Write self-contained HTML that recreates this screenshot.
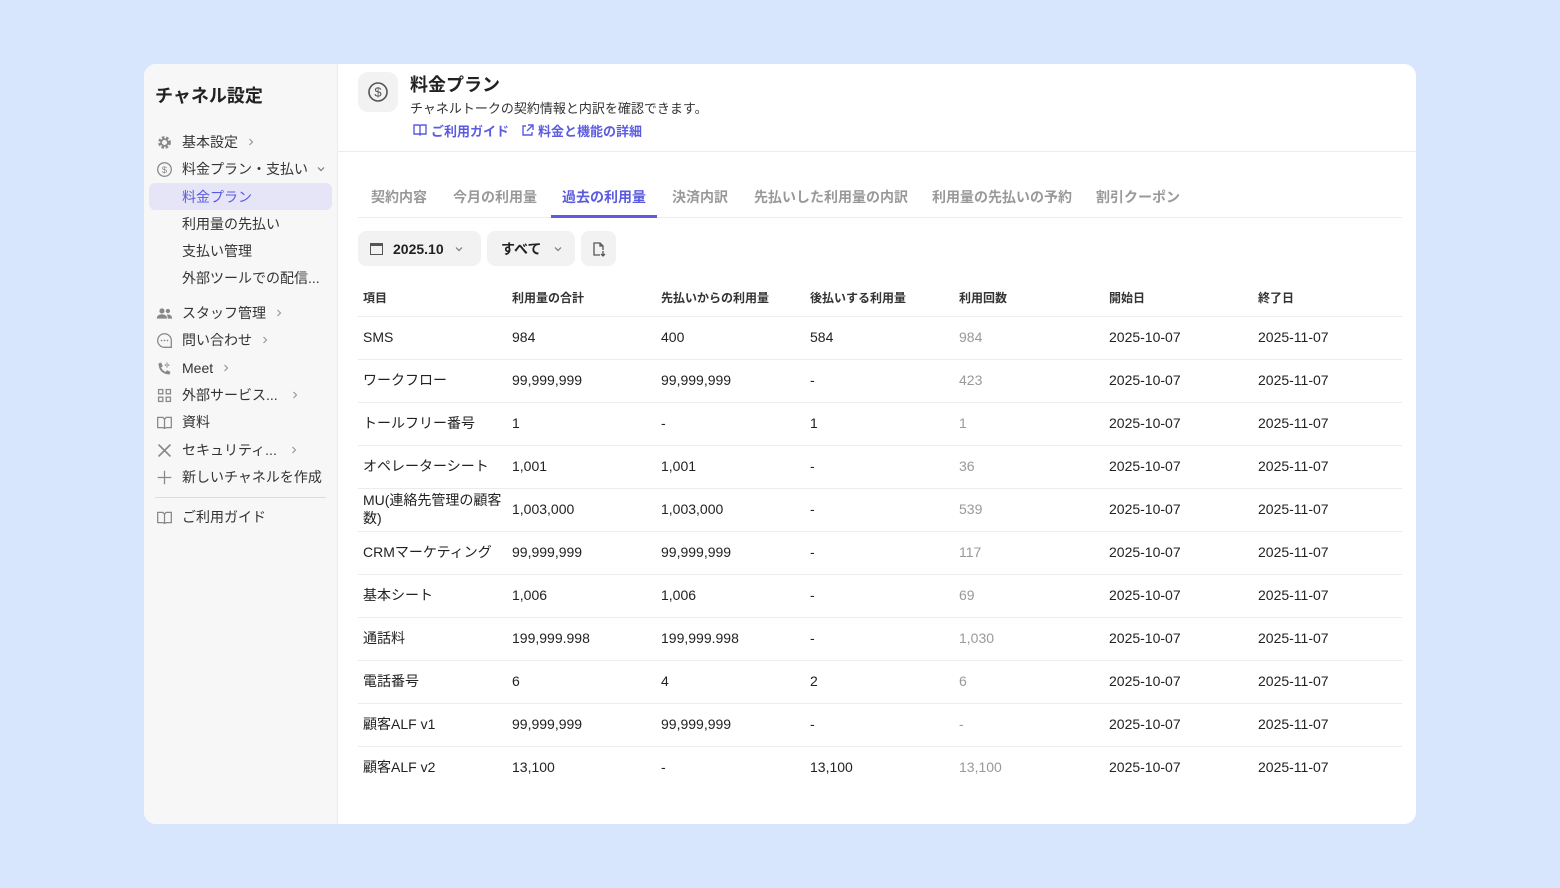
<!DOCTYPE html><html><head><meta charset="utf-8"><style>
*{box-sizing:border-box;margin:0;padding:0}
body{width:1560px;height:888px;background:#d7e5fd;font-family:"Liberation Sans","Noto Sans CJK JP",sans-serif;color:#222;position:relative;overflow:hidden}
.card{position:absolute;left:144px;top:64px;width:1272px;height:760px;background:#fff;border-radius:12px;overflow:hidden}
.side{position:absolute;left:0;top:0;width:194px;height:760px;background:#f7f7f7;border-right:1px solid #ececec}
.abs{position:absolute;white-space:nowrap}
.si{position:absolute;left:12px;font-size:14px;color:#333;display:flex;align-items:center;height:20px}
.si svg{width:17px;height:17px;margin-right:9px}
.sub{position:absolute;left:38px;font-size:14px;color:#333}
.si svg.cv{width:10px;height:10px;margin:0 0 0 8px}
.tab{position:absolute;top:187px;font-size:14px;color:#999;font-weight:bold}
.th{position:absolute;top:289px;font-size:12px;font-weight:bold;color:#333}
.row{position:absolute;left:358px;width:1044px;height:43px;border-top:1px solid #ececec;font-size:14px;color:#222}
.row span{position:absolute;top:12px;white-space:nowrap}
.g{color:#999}
.btn{position:absolute;top:231px;height:35px;background:#f2f2f2;border-radius:8px;font-size:14px;font-weight:bold;display:flex;align-items:center}
</style></head><body>
<svg width="0" height="0" style="position:absolute"><defs><symbol id="r" viewBox="0 0 10 10"><path d="M3.5 2l3 3-3 3" fill="none" stroke="#999" stroke-width="1.2"/></symbol><symbol id="d" viewBox="0 0 10 10"><path d="M2 3.5l3 3 3-3" fill="none" stroke="#777" stroke-width="1.2"/></symbol></defs></svg>
<div class="card">
<div class="side">
<div class="abs" style="left:11px;top:18px;font-size:18px;font-weight:bold;color:#222">チャネル設定</div>
<div class="si" style="top:68px"><svg viewBox="0 0 20 20"><circle cx="10" cy="10" r="6" fill="none" stroke="#888" stroke-width="3" stroke-dasharray="3 2"/><circle cx="10" cy="10" r="4" fill="none" stroke="#888" stroke-width="2"/></svg>基本設定<svg class="cv"><use href="#r"/></svg></div>
<div class="si" style="top:95px"><svg viewBox="0 0 20 20"><circle cx="10" cy="10" r="8" fill="none" stroke="#888" stroke-width="1.5"/><text x="10" y="14" font-size="11" text-anchor="middle" fill="#888">$</text></svg>料金プラン・支払い<svg class="cv"><use href="#d"/></svg></div>
<div class="abs" style="left:5px;top:119px;width:183px;height:27px;background:#e6e5f7;border-radius:6px"></div>
<div class="sub" style="top:123px;color:#5b5be0">料金プラン</div>
<div class="sub" style="top:150px">利用量の先払い</div>
<div class="sub" style="top:177px">支払い管理</div>
<div class="sub" style="top:204px">外部ツールでの配信...</div>
<div class="si" style="top:239px"><svg viewBox="0 0 20 20"><circle cx="7" cy="7" r="3" fill="#888"/><circle cx="14" cy="7" r="2.5" fill="#888"/><path d="M1 16c0-4 3-5 6-5s6 1 6 5zM13 11c3 0 6 1 6 5h-5" fill="#888"/></svg>スタッフ管理<svg class="cv"><use href="#r"/></svg></div>
<div class="si" style="top:266px"><svg viewBox="0 0 20 20"><path d="M10 2a8 8 0 1 0 0 16h8v-8a8 8 0 0 0-8-8z" fill="none" stroke="#888" stroke-width="1.5"/><circle cx="6.5" cy="10" r="1" fill="#888"/><circle cx="10" cy="10" r="1" fill="#888"/><circle cx="13.5" cy="10" r="1" fill="#888"/></svg>問い合わせ<svg class="cv"><use href="#r"/></svg></div>
<div class="si" style="top:294px"><svg viewBox="0 0 20 20"><path d="M3 4c0 8 5 13 13 13l1-3-4-2-2 2c-2-1-4-3-5-5l2-2-2-4z" fill="#888"/><path d="M13 3v6M11 5v2M15 5v2" stroke="#888" stroke-width="1.2"/></svg>Meet<svg class="cv"><use href="#r"/></svg></div>
<div class="si" style="top:321px"><svg viewBox="0 0 20 20" fill="none" stroke="#888" stroke-width="1.5"><rect x="3" y="3" width="5" height="5"/><rect x="12" y="3" width="5" height="5"/><rect x="3" y="12" width="5" height="5"/><rect x="12" y="12" width="5" height="5"/></svg>外部サービス...<svg class="cv" style="margin-left:12px"><use href="#r"/></svg></div>
<div class="si" style="top:348px"><svg viewBox="0 0 20 20" fill="none" stroke="#888" stroke-width="1.5"><path d="M2 4h6l2 2 2-2h6v12h-6l-2 1-2-1H2zM10 6v11"/></svg>資料</div>
<div class="si" style="top:376px"><svg viewBox="0 0 20 20" stroke="#888" stroke-width="2"><path d="M3 3l14 14M17 3L3 17"/></svg>セキュリティ...<svg class="cv" style="margin-left:12px"><use href="#r"/></svg></div>
<div class="si" style="top:403px"><svg viewBox="0 0 20 20" stroke="#888" stroke-width="1.5"><path d="M10 2v16M2 10h16"/></svg>新しいチャネルを作成</div>
<div class="abs" style="left:11px;top:433px;width:171px;height:1px;background:#ddd"></div>
<div class="si" style="top:443px"><svg viewBox="0 0 20 20" fill="none" stroke="#888" stroke-width="1.5"><path d="M2 4h6l2 2 2-2h6v12h-6l-2 1-2-1H2zM10 6v11"/></svg>ご利用ガイド</div>
</div>
</div>
<div class="abs" style="left:358px;top:72px;width:40px;height:40px;border-radius:10px;background:#f2f2f2"></div>
<svg class="abs" style="left:367px;top:81px" width="22" height="22" viewBox="0 0 22 22"><circle cx="11" cy="11" r="9" fill="none" stroke="#555" stroke-width="1.6"/><text x="11" y="15.5" font-size="13" text-anchor="middle" fill="#555" font-family="Liberation Sans">$</text></svg>
<div class="abs" style="left:410px;top:71px;font-size:18px;font-weight:bold">料金プラン</div>
<div class="abs" style="left:410px;top:98px;font-size:13px;color:#333">チャネルトークの契約情報と内訳を確認できます。</div>
<svg class="abs" style="left:413px;top:124px" width="14" height="12" viewBox="0 0 14 12" fill="none" stroke="#5b5be0" stroke-width="1.4"><path d="M1 1h5l1 1 1-1h5v9H8l-1 1-1-1H1zM7 2v9"/></svg>
<div class="abs" style="left:431px;top:121px;font-size:13px;font-weight:bold;color:#5b5be0">ご利用ガイド</div>
<svg class="abs" style="left:521px;top:124px" width="13" height="13" viewBox="0 0 13 13" fill="none" stroke="#5b5be0" stroke-width="1.4"><path d="M5 2H2v9h9V8M7 1h5v5M12 1L6 7"/></svg>
<div class="abs" style="left:538px;top:121px;font-size:13px;font-weight:bold;color:#5b5be0">料金と機能の詳細</div>
<div class="abs" style="left:338px;top:151px;width:1078px;height:1px;background:#ececec"></div>
<div class="tab" style="left:371px">契約内容</div>
<div class="tab" style="left:453px">今月の利用量</div>
<div class="tab" style="left:562px;color:#5b5be0">過去の利用量</div>
<div class="tab" style="left:672px">決済内訳</div>
<div class="tab" style="left:754px">先払いした利用量の内訳</div>
<div class="tab" style="left:932px">利用量の先払いの予約</div>
<div class="tab" style="left:1096px">割引クーポン</div>
<div class="abs" style="left:358px;top:217px;width:1044px;height:1px;background:#ececec"></div>
<div class="abs" style="left:551px;top:215px;width:106px;height:3px;background:#5b5be0"></div>
<div class="btn" style="left:358px;width:123px;padding-left:12px"><span style="display:inline-block;width:13px;height:12px;border:1.5px solid #555;border-top-width:3px;margin-right:10px"></span>2025.10<svg width="10" height="10" style="margin-left:10px"><use href="#d"/></svg></div>
<div class="btn" style="left:487px;width:88px;padding-left:14px">すべて<svg width="10" height="10" style="margin-left:12px"><use href="#d"/></svg></div>
<div class="btn" style="left:581px;width:35px;justify-content:center"><svg width="16" height="16" viewBox="0 0 16 16" fill="none" stroke="#555" stroke-width="1.3"><path d="M9 14H3V2h6l3 3v4M9 2v3h3M12 10v5M10 13l2 2 2-2"/></svg></div>
<div class="th" style="left:363px">項目</div><div class="th" style="left:512px">利用量の合計</div><div class="th" style="left:661px">先払いからの利用量</div><div class="th" style="left:810px">後払いする利用量</div><div class="th" style="left:959px">利用回数</div><div class="th" style="left:1109px">開始日</div><div class="th" style="left:1258px">終了日</div>
<div class="row" style="top:316px"><span style="left:5px">SMS</span><span style="left:154px">984</span><span style="left:303px">400</span><span style="left:452px">584</span><span class="g" style="left:601px">984</span><span style="left:751px">2025-10-07</span><span style="left:900px">2025-11-07</span></div>
<div class="row" style="top:359px"><span style="left:5px;top:10px">ワークフロー</span><span style="left:154px">99,999,999</span><span style="left:303px">99,999,999</span><span style="left:452px">-</span><span class="g" style="left:601px">423</span><span style="left:751px">2025-10-07</span><span style="left:900px">2025-11-07</span></div>
<div class="row" style="top:402px"><span style="left:5px;top:10px">トールフリー番号</span><span style="left:154px">1</span><span style="left:303px">-</span><span style="left:452px">1</span><span class="g" style="left:601px">1</span><span style="left:751px">2025-10-07</span><span style="left:900px">2025-11-07</span></div>
<div class="row" style="top:445px"><span style="left:5px;top:10px">オペレーターシート</span><span style="left:154px">1,001</span><span style="left:303px">1,001</span><span style="left:452px">-</span><span class="g" style="left:601px">36</span><span style="left:751px">2025-10-07</span><span style="left:900px">2025-11-07</span></div>
<div class="row" style="top:488px"><span style="left:5px;top:2px;line-height:18px;white-space:normal;width:142px">MU(連絡先管理の顧客数)</span><span style="left:154px">1,003,000</span><span style="left:303px">1,003,000</span><span style="left:452px">-</span><span class="g" style="left:601px">539</span><span style="left:751px">2025-10-07</span><span style="left:900px">2025-11-07</span></div>
<div class="row" style="top:531px"><span style="left:5px;top:10px">CRMマーケティング</span><span style="left:154px">99,999,999</span><span style="left:303px">99,999,999</span><span style="left:452px">-</span><span class="g" style="left:601px">117</span><span style="left:751px">2025-10-07</span><span style="left:900px">2025-11-07</span></div>
<div class="row" style="top:574px"><span style="left:5px;top:10px">基本シート</span><span style="left:154px">1,006</span><span style="left:303px">1,006</span><span style="left:452px">-</span><span class="g" style="left:601px">69</span><span style="left:751px">2025-10-07</span><span style="left:900px">2025-11-07</span></div>
<div class="row" style="top:617px"><span style="left:5px;top:10px">通話料</span><span style="left:154px">199,999.998</span><span style="left:303px">199,999.998</span><span style="left:452px">-</span><span class="g" style="left:601px">1,030</span><span style="left:751px">2025-10-07</span><span style="left:900px">2025-11-07</span></div>
<div class="row" style="top:660px"><span style="left:5px;top:10px">電話番号</span><span style="left:154px">6</span><span style="left:303px">4</span><span style="left:452px">2</span><span class="g" style="left:601px">6</span><span style="left:751px">2025-10-07</span><span style="left:900px">2025-11-07</span></div>
<div class="row" style="top:703px"><span style="left:5px;top:10px">顧客ALF v1</span><span style="left:154px">99,999,999</span><span style="left:303px">99,999,999</span><span style="left:452px">-</span><span class="g" style="left:601px">-</span><span style="left:751px">2025-10-07</span><span style="left:900px">2025-11-07</span></div>
<div class="row" style="top:746px"><span style="left:5px;top:10px">顧客ALF v2</span><span style="left:154px">13,100</span><span style="left:303px">-</span><span style="left:452px">13,100</span><span class="g" style="left:601px">13,100</span><span style="left:751px">2025-10-07</span><span style="left:900px">2025-11-07</span></div>
</body></html>
